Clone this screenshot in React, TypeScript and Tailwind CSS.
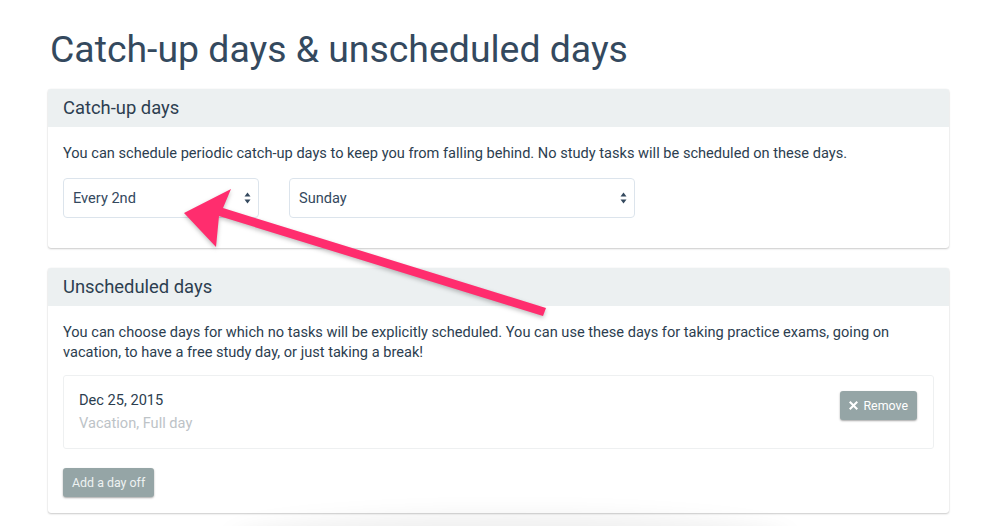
function SelectBox({ value, width }: { value: string; width: string }) {
  return (
    <div
      className={`${width} flex h-10 items-center justify-between rounded border border-[#dce4ec] bg-white pr-[7px] pl-[9px] text-[14.6px] text-[#34495e]`}
    >
      <span>{value}</span>
      <svg width="7" height="12" viewBox="0 0 7 12" className="fill-[#34495e]">
        <path d="M3.5 0.5 L6.5 4.5 L0.5 4.5 Z" />
        <path d="M3.5 11.5 L6.5 7.5 L0.5 7.5 Z" />
      </svg>
    </div>
  );
}

function Panel({ title, children }: { title: string; children: React.ReactNode }) {
  return (
    <section className="overflow-hidden rounded-[3px] bg-white shadow-[0_1px_2px_rgba(0,0,0,0.2),0_0_1px_rgba(0,0,0,0.12)]">
      <div className="flex h-[38px] items-center bg-[#ecf0f1] px-[15px] text-[18.4px] text-[#2c3e50]">
        {title}
      </div>
      <div className="px-[15px] pt-[15px] pb-[15px] text-[14.6px] leading-[20px] text-[#2c3e50]">
        {children}
      </div>
    </section>
  );
}

export default function App() {
  return (
    <div className="relative h-[526px] overflow-hidden bg-white font-['Roboto',sans-serif]">
      <div className="mx-[48px] w-[901px] pt-[24px]">
        <h1 className="ml-[2px] text-[37.4px] leading-[50px] text-[#34495e]">
          Catch-up days &amp; unscheduled days
        </h1>

        <div className="mt-[15px] flex flex-col gap-[20px]">
          <Panel title="Catch-up days">
            <p className="mt-[1px]">
              You can schedule periodic catch-up days to keep you from falling behind. No study tasks will be scheduled on these days.
            </p>
            <div className="mt-[15px] mb-[15px] flex gap-[30px]">
              <SelectBox value="Every 2nd" width="w-[196px]" />
              <SelectBox value="Sunday" width="w-[346px]" />
            </div>
          </Panel>

          <Panel title="Unscheduled days">
            <p className="mt-[1px] pr-[30px]">
              You can choose days for which no tasks will be explicitly scheduled. You can use these days for taking practice exams, going on vacation, to have a free study day, or just taking a break!
            </p>
            <div className="mt-[13px] flex items-start justify-between rounded-[3px] border border-[#eef0f1] px-[15px] pt-[13px] pb-[13px]">
              <div>
                <div className="text-[14.6px] leading-[22px] text-[#2c3e50]">Dec 25, 2015</div>
                <div className="text-[14.6px] leading-[24px] text-[#bdc3c7]">Vacation, Full day</div>
              </div>
              <button className="mt-[2px] mr-[1px] flex h-[29px] items-center gap-[5px] rounded-[3px] bg-[#95a5a6] px-[9px] text-[12.4px] text-white shadow-[0_1px_2px_rgba(0,0,0,0.35)]">
                {/* fa-times style cross */}
                <svg width="9" height="9" viewBox="0 0 10 10" className="fill-white">
                  <path d="M1.6 0 L5 3.4 L8.4 0 L10 1.6 L6.6 5 L10 8.4 L8.4 10 L5 6.6 L1.6 10 L0 8.4 L3.4 5 L0 1.6 Z" />
                </svg>
                Remove
              </button>
            </div>
            <button className="mt-[19px] mb-[1px] h-[29px] rounded-[3px] bg-[#95a5a6] px-[9px] text-[12.4px] text-[#eef2f2] shadow-[0_1px_2px_rgba(0,0,0,0.35)]">
              Add a day off
            </button>
          </Panel>
        </div>
      </div>

      <div className="pointer-events-none absolute bottom-[-40px] left-[230px] h-[52px] w-[560px] rounded-[50%] bg-[#000]/[0.06] blur-[10px]" />

      <svg
        className="pointer-events-none absolute top-0 left-0"
        width="1000"
        height="526"
        viewBox="0 0 1000 526"
      >
        <path
          d="M184 213 L231 189 L223 208 L546 308 L543 316 L219 216 L216 247 Z"
          fill="#ff2d6e"
          style={{ filter: "drop-shadow(0 2px 2px rgba(0,0,0,0.25))" }}
        />
      </svg>
    </div>
  );
}
